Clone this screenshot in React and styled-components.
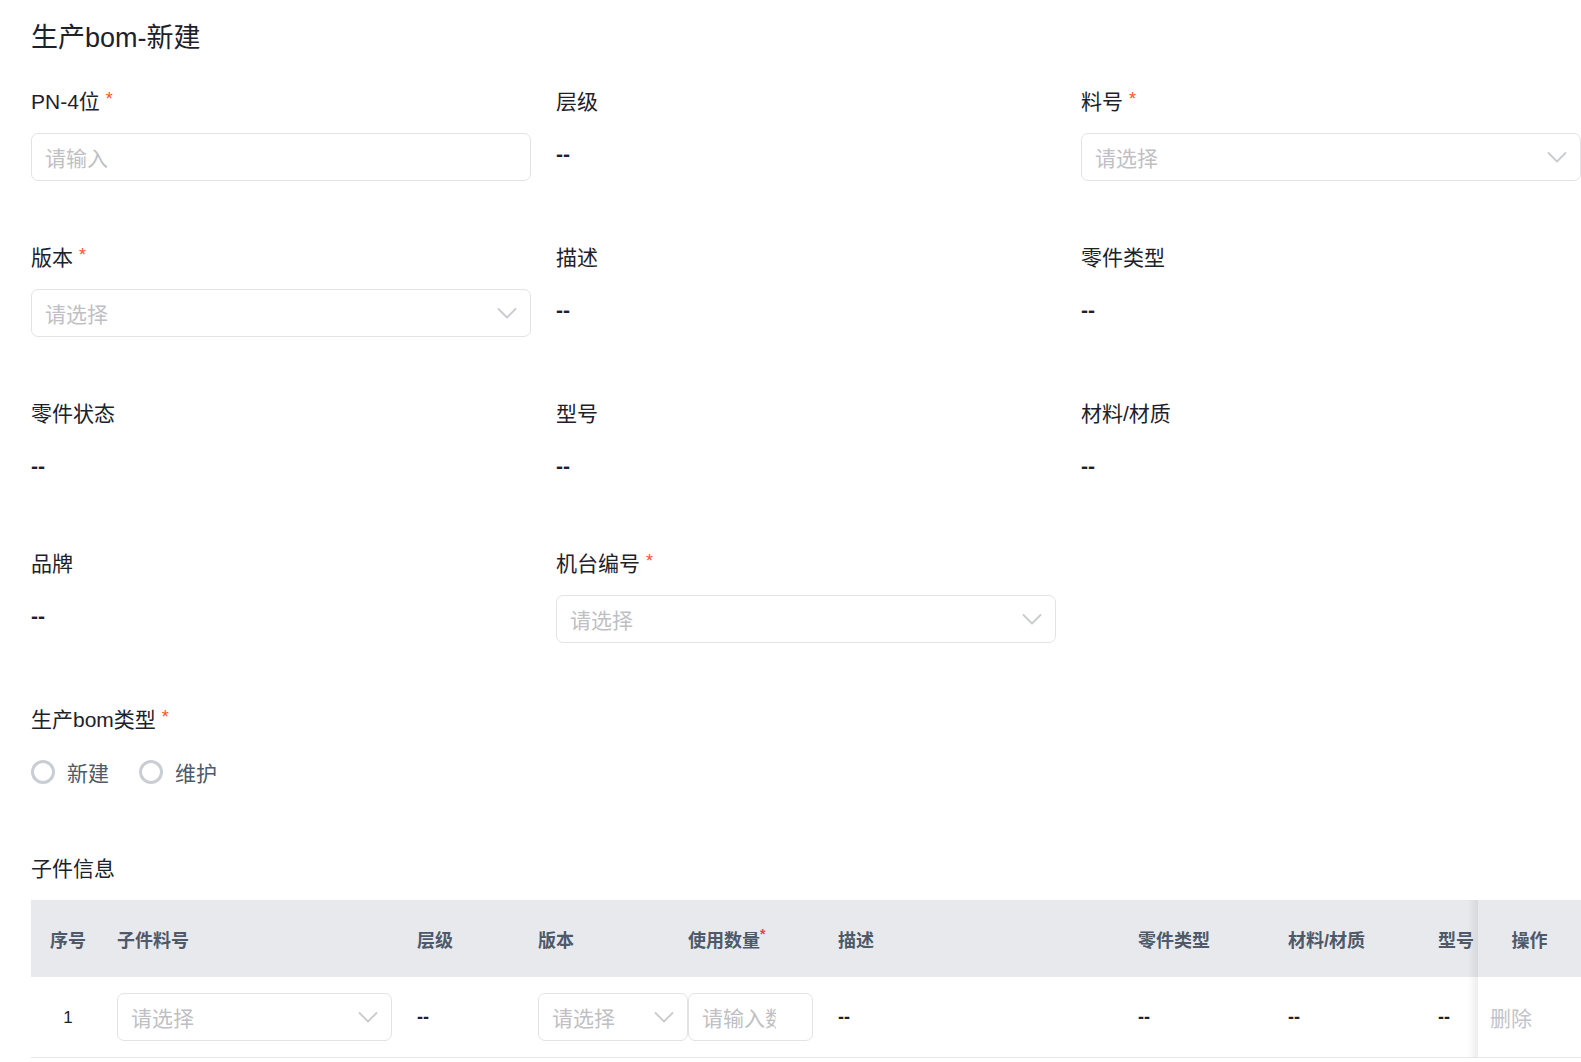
import styled, { createGlobalStyle } from "styled-components";

const GlobalStyle = createGlobalStyle`
  html, body {
    margin: 0;
    padding: 0;
    background: #fff;
    overflow: hidden;
  }
  body {
    font-family: "Liberation Sans", "Noto Sans CJK SC", sans-serif;
    color: #1d2129;
  }
`;

const Page = styled.div`
  padding: 18px 0 0 31px;
  width: 1550px;
`;

const Title = styled.h1`
  margin: 0 0 28px;
  font-size: 27px;
  font-weight: 400;
  line-height: 40px;
  color: #1d2129;
`;

const FormGrid = styled.div`
  display: grid;
  grid-template-columns: repeat(3, 500px);
  column-gap: 25px;
  row-gap: 61px;
`;

const FormItem = styled.div`
  display: flex;
  flex-direction: column;
  gap: 15px;
  grid-column: ${(p) => (p.$full ? "1 / -1" : "auto")};
`;

const Label = styled.div`
  font-size: 21px;
  line-height: 32px;
  height: 32px;
  color: #1d2129;
  white-space: nowrap;
`;

const Required = styled.span`
  color: #f5532d;
  margin-left: 6px;
  font-size: 18px;
  vertical-align: top;
  line-height: 26px;
`;

const Value = styled.div`
  font-size: 21px;
  line-height: 42px;
  height: 42px;
  color: #1d2129;
  font-weight: 700;
`;

const Box = styled.div`
  box-sizing: border-box;
  height: 48px;
  width: ${(p) => p.$width || "100%"};
  flex-shrink: 0;
  border: 1px solid #e3e3e6;
  border-radius: 7px;
  background: #fff;
  display: flex;
  align-items: center;
  justify-content: space-between;
  padding: 0 ${(p) => p.$padRight || "12px"} 0 13px;
  overflow: hidden;
`;

const Placeholder = styled.span`
  font-size: 21px;
  font-weight: 400;
  color: #bfbfc4;
  white-space: nowrap;
  overflow: hidden;
`;

const Chevron = () => (
  <svg width="22" height="22" viewBox="0 0 22 22" fill="none">
    <path
      d="M2.5 7l8.5 8.5L19.5 7"
      stroke="#c9cbd1"
      strokeWidth="1.8"
      strokeLinecap="round"
      strokeLinejoin="round"
    />
  </svg>
);

const Select = ({ width }) => (
  <Box $width={width}>
    <Placeholder>请选择</Placeholder>
    <Chevron />
  </Box>
);

const Input = ({ width, padRight, text = "请输入" }) => (
  <Box $width={width} $padRight={padRight}>
    <Placeholder>{text}</Placeholder>
  </Box>
);

const RadioGroup = styled.div`
  display: flex;
  align-items: center;
  height: 42px;
  gap: 30px;
`;

const RadioItem = styled.label`
  display: flex;
  align-items: center;
  gap: 12px;
  font-size: 21px;
  color: #4e5969;
`;

const RadioCircle = styled.span`
  box-sizing: border-box;
  width: 24px;
  height: 24px;
  border-radius: 50%;
  border: 3px solid #c9cdd4;
`;

const SectionTitle = styled.div`
  margin-top: 60px;
  font-size: 21px;
  line-height: 32px;
  color: #1d2129;
`;

const TableWrap = styled.div`
  margin-top: 15px;
  width: 1550px;
  overflow: hidden;
`;

const Table = styled.table`
  border-collapse: collapse;
  table-layout: fixed;
  width: 1645px;
`;

const fixedCol = `
  position: sticky;
  right: 0;
  z-index: 2;
  &::before {
    content: "";
    position: absolute;
    top: 0;
    bottom: 0;
    left: -10px;
    width: 10px;
    background: linear-gradient(to left, rgba(0, 0, 0, 0.07), rgba(0, 0, 0, 0));
  }
`;

const Th = styled.th`
  height: 77px;
  padding: 0 12px;
  background: #e8e9ed;
  font-size: 18px;
  font-weight: 700;
  color: #4e5969;
  text-align: ${(p) => p.$align || "left"};
  white-space: nowrap;
  ${(p) => p.$fixed && fixedCol}
`;

const Td = styled.td`
  height: 80px;
  padding: 0 12px;
  font-size: 18px;
  color: #1d2129;
  font-weight: 700;
  border-bottom: 1px solid #e5e6eb;
  text-align: ${(p) => p.$align || "left"};
  white-space: nowrap;
  overflow: visible;
  ${(p) => p.$fixed && `background: #fff; ${fixedCol}`}
`;

const IndexText = styled.span`
  font-weight: 400;
  font-size: 17px;
`;

const DeleteLink = styled.span`
  font-size: 21px;
  font-weight: 400;
  color: #c2c4c9;
`;

const Star = styled.span`
  color: #f53f3f;
  font-size: 14px;
  vertical-align: top;
`;

const columns = [
  { key: "idx", title: "序号", width: 74, align: "center" },
  { key: "code", title: "子件料号", width: 300 },
  { key: "level", title: "层级", width: 121 },
  { key: "ver", title: "版本", width: 150 },
  { key: "qty", title: "使用数量", width: 150, required: true },
  { key: "desc", title: "描述", width: 300 },
  { key: "ptype", title: "零件类型", width: 150 },
  { key: "mat", title: "材料/材质", width: 150 },
  { key: "model", title: "型号", width: 147 },
  { key: "op", title: "操作", width: 103, align: "center", fixed: true },
];

const req = <Required>*</Required>;

export default function App() {
  return (
    <>
      <GlobalStyle />
      <Page>
        <Title>生产bom-新建</Title>
        <FormGrid>
          <FormItem>
            <Label>PN-4位{req}</Label>
            <Input />
          </FormItem>
          <FormItem>
            <Label>层级</Label>
            <Value>--</Value>
          </FormItem>
          <FormItem>
            <Label>料号{req}</Label>
            <Select />
          </FormItem>

          <FormItem>
            <Label>版本{req}</Label>
            <Select />
          </FormItem>
          <FormItem>
            <Label>描述</Label>
            <Value>--</Value>
          </FormItem>
          <FormItem>
            <Label>零件类型</Label>
            <Value>--</Value>
          </FormItem>

          <FormItem>
            <Label>零件状态</Label>
            <Value>--</Value>
          </FormItem>
          <FormItem>
            <Label>型号</Label>
            <Value>--</Value>
          </FormItem>
          <FormItem>
            <Label>材料/材质</Label>
            <Value>--</Value>
          </FormItem>

          <FormItem>
            <Label>品牌</Label>
            <Value>--</Value>
          </FormItem>
          <FormItem>
            <Label>机台编号{req}</Label>
            <Select />
          </FormItem>
          <div />

          <FormItem $full>
            <Label>生产bom类型{req}</Label>
            <RadioGroup>
              <RadioItem>
                <RadioCircle />
                新建
              </RadioItem>
              <RadioItem>
                <RadioCircle />
                维护
              </RadioItem>
            </RadioGroup>
          </FormItem>
        </FormGrid>

        <SectionTitle>子件信息</SectionTitle>
        <TableWrap>
          <Table>
            <colgroup>
              {columns.map((c) => (
                <col key={c.key} style={{ width: c.width }} />
              ))}
            </colgroup>
            <thead>
              <tr>
                {columns.map((c) => (
                  <Th key={c.key} $align={c.align} $fixed={c.fixed}>
                    {c.title}
                    {c.required && <Star>*</Star>}
                  </Th>
                ))}
              </tr>
            </thead>
            <tbody>
              <tr>
                <Td $align="center">
                  <IndexText>1</IndexText>
                </Td>
                <Td>
                  <Select width="275px" />
                </Td>
                <Td>--</Td>
                <Td>
                  <Select width="150px" />
                </Td>
                <Td>
                  <Input width="125px" padRight="36px" text="请输入数量" />
                </Td>
                <Td>--</Td>
                <Td>--</Td>
                <Td>--</Td>
                <Td>--</Td>
                <Td $fixed>
                  <DeleteLink>删除</DeleteLink>
                </Td>
              </tr>
            </tbody>
          </Table>
        </TableWrap>
      </Page>
    </>
  );
}
